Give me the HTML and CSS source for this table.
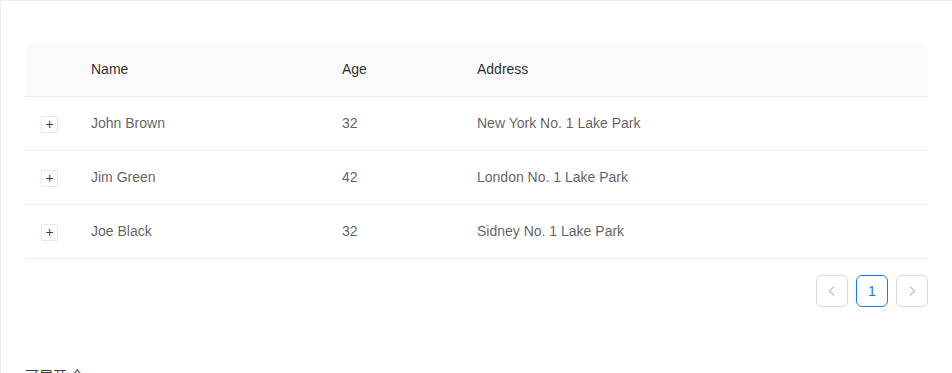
FILE: index.html
```html
<!DOCTYPE html>
<html>
<head>
<meta charset="utf-8">
<link rel="stylesheet" href="styles.css">
</head>
<body>
<div class="card">
  <div class="table">
    <div class="row head">
      <div class="cell c-exp"></div>
      <div class="cell c-name">Name</div>
      <div class="cell c-age">Age</div>
      <div class="cell c-addr">Address</div>
    </div>
    <div class="row">
      <div class="cell c-exp"><span class="exp">+</span></div>
      <div class="cell c-name">John Brown</div>
      <div class="cell c-age">32</div>
      <div class="cell c-addr">New York No. 1 Lake Park</div>
    </div>
    <div class="row">
      <div class="cell c-exp"><span class="exp">+</span></div>
      <div class="cell c-name">Jim Green</div>
      <div class="cell c-age">42</div>
      <div class="cell c-addr">London No. 1 Lake Park</div>
    </div>
    <div class="row">
      <div class="cell c-exp"><span class="exp">+</span></div>
      <div class="cell c-name">Joe Black</div>
      <div class="cell c-age">32</div>
      <div class="cell c-addr">Sidney No. 1 Lake Park</div>
    </div>
  </div>
  <div class="pager">
    <button class="pg">
      <svg width="12" height="12" viewBox="0 0 12 12"><path d="M8 1.5 L3.5 6 L8 10.5" fill="none" stroke="#bfbfbf" stroke-width="1.1"/></svg>
    </button>
    <button class="pg active">1</button>
    <button class="pg">
      <svg width="12" height="12" viewBox="0 0 12 12"><path d="M4 1.5 L8.5 6 L4 10.5" fill="none" stroke="#bfbfbf" stroke-width="1.1"/></svg>
    </button>
  </div>
  <div class="title">可展开 全</div>
</div>
</body>
</html>
```

FILE: styles.css
```css
html, body {
  margin: 0;
  padding: 0;
  overflow: hidden;
  background: #fff;
}
body {
  font-family: "Liberation Sans", Arial, "Noto Sans CJK SC", sans-serif;
  font-size: 14px;
  color: rgba(0, 0, 0, 0.65);
}
.card {
  width: 953px;
  box-sizing: border-box;
  border: 1px solid #eceef1;
  padding: 42px 24px 24px 24px;
}
.table {
  display: flex;
  flex-direction: column;
}
.row {
  display: flex;
  height: 54px;
  box-sizing: border-box;
  border-bottom: 1px solid #f0f0f0;
  align-items: center;
}
.row.head {
  background: #fafafa;
  color: rgba(0, 0, 0, 0.85);
  border-radius: 8px 8px 0 0;
  border-bottom-color: #ebebeb;
}
.cell {
  padding: 0 16px;
  box-sizing: border-box;
  line-height: 21px;
}
.c-exp {
  width: 50px;
  display: flex;
  justify-content: flex-start;
  padding: 0 0 0 16px;
}
.c-name { width: 251px; }
.c-age { width: 135px; }
.c-addr { flex: 1; }
.exp {
  width: 17px;
  height: 17px;
  box-sizing: border-box;
  border: 1px solid #e6e6e6;
  border-radius: 2px;
  display: flex;
  align-items: center;
  justify-content: center;
  font-size: 14px;
  line-height: 1;
  color: rgba(0, 0, 0, 0.75);
  margin-top: 1px;
}
.pager {
  display: flex;
  justify-content: flex-end;
  gap: 8px;
  margin-top: 16px;
}
.pg {
  width: 32px;
  height: 32px;
  box-sizing: border-box;
  border: 1px solid #d9d9d9;
  border-radius: 6px;
  background: #fff;
  display: flex;
  align-items: center;
  justify-content: center;
  padding: 0;
  font-family: "Liberation Sans", Arial, sans-serif;
  font-size: 14px;
}
.pg.active {
  border-color: #1677ff;
  color: #1677ff;
}
.title {
  margin-top: 57px;
  font-family: "Noto Sans CJK SC", sans-serif;
  font-size: 14px;
  line-height: 22px;
  color: rgba(0, 0, 0, 0.75);
}
```
